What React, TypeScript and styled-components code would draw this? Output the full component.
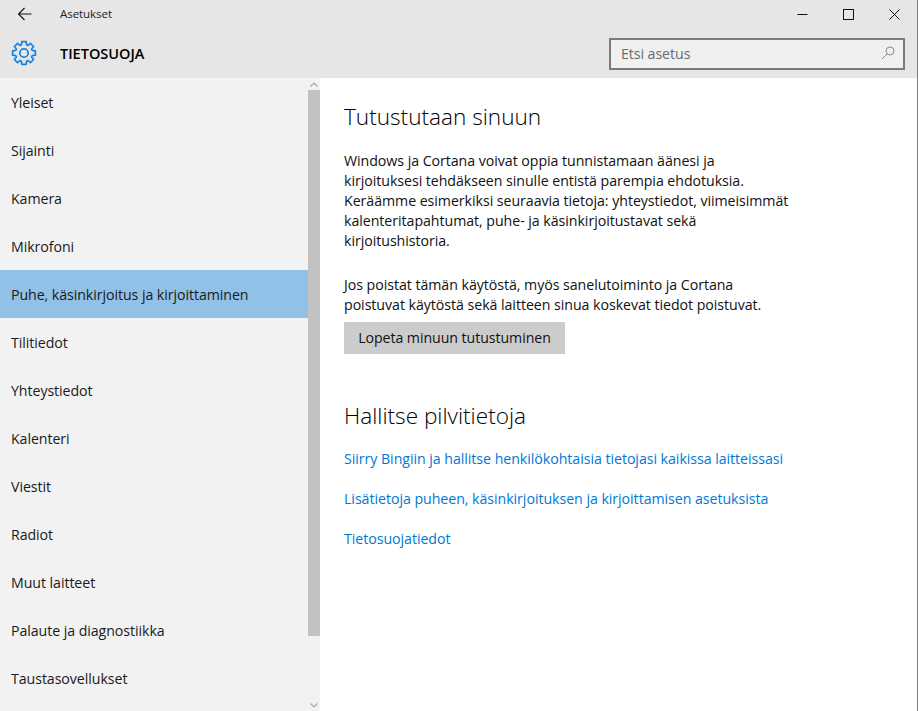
import React from 'react';
import styled, { createGlobalStyle } from 'styled-components';

const GlobalStyle = createGlobalStyle`
  html, body {
    margin: 0;
    padding: 0;
    height: 100%;
    background: #fff;
    font-family: "Open Sans", "Noto Sans", "Liberation Sans", sans-serif;
  }
`;

const Window = styled.div`
  width: 918px;
  height: 711px;
  display: flex;
  flex-direction: column;
  overflow: hidden;
  box-sizing: border-box;
  border-right: 1px solid #7a7a7a;
`;

const Header = styled.header`
  height: 78px;
  flex: none;
  background: #e6e6e6;
  display: flex;
  flex-direction: column;
`;

const TitleBar = styled.div`
  height: 28px;
  display: flex;
  align-items: center;
`;

const BackButton = styled.div`
  width: 60px;
  padding-left: 18px;
  box-sizing: border-box;
  display: flex;
  align-items: center;
`;

const WindowTitle = styled.span`
  flex: 1;
  margin-top: -2px;
  font-size: 11.5px;
  letter-spacing: -0.05px;
  color: #222;
`;

const WindowControls = styled.div`
  display: flex;
  align-items: center;
`;

const ControlButton = styled.div`
  width: 46px;
  height: 28px;
  display: flex;
  align-items: center;
  justify-content: center;
`;

const PageBar = styled.div`
  flex: 1;
  display: flex;
  align-items: center;
`;

const PageIcon = styled.div`
  width: 60px;
  padding-left: 11px;
  box-sizing: border-box;
  display: flex;
  align-items: center;
`;

const PageTitle = styled.h1`
  flex: 1;
  margin: 0;
  font-size: 14.5px;
  font-weight: 600;
  color: #000;
`;

const SearchBox = styled.div`
  width: 296px;
  height: 32px;
  margin: 2px 12px 0 0;
  padding: 0 8px 2px 10px;
  box-sizing: border-box;
  display: flex;
  align-items: center;
  justify-content: space-between;
  border: 2px solid #7a7a7a;
  background: #f0f0f0;
  font-size: 14.2px;
  letter-spacing: -0.07px;
  color: #6b6b6b;
`;

const Body = styled.div`
  flex: 1;
  min-height: 0;
  display: flex;
`;

const Sidebar = styled.nav`
  width: 320px;
  flex: none;
  display: flex;
  background: #f2f2f2;
`;

const NavList = styled.ul`
  flex: 1;
  margin: 0;
  padding: 0;
  list-style: none;
  overflow: hidden;
`;

const NavItem = styled.li<{ $active?: boolean }>`
  height: 48px;
  padding-left: 11px;
  display: flex;
  align-items: center;
  font-size: 14.2px;
  letter-spacing: -0.07px;
  color: #1a1a1a;
  background: ${(p) => (p.$active ? '#91c1e7' : 'transparent')};
`;

const Scrollbar = styled.div`
  width: 12px;
  flex: none;
  display: flex;
  flex-direction: column;
`;

const ScrollArrow = styled.div`
  height: 12px;
  flex: none;
  display: flex;
  align-items: center;
  justify-content: center;
`;

const ScrollTrack = styled.div`
  flex: 1;
`;

const ScrollThumb = styled.div`
  height: 546px;
  background: #c2c2c2;
`;

const Content = styled.main`
  flex: 1;
  padding: 24px 0 0 24px;
  color: #000;
`;

const Heading = styled.h2`
  margin: 0 0 19px;
  font-size: 22.6px;
  line-height: 30px;
  font-weight: 300;
  color: #000;
`;

const Paragraph = styled.p`
  width: 460px;
  margin: 0 0 24px;
  font-size: 14.2px;
  line-height: 20px;
  letter-spacing: -0.05px;
  color: #111;
`;

const ActionButton = styled.div`
  width: 221px;
  height: 32px;
  margin: -17px 0 47px;
  padding-bottom: 2px;
  box-sizing: border-box;
  display: flex;
  align-items: center;
  justify-content: center;
  background: #cccccc;
  font-size: 14.2px;
  letter-spacing: -0.07px;
  color: #111;
`;

const LinkList = styled.div`
  margin-top: -1px;
  display: flex;
  flex-direction: column;
  gap: 20px;
`;

const TextLink = styled.a`
  font-size: 14.2px;
  line-height: 20px;
  letter-spacing: -0.05px;
  color: #0078d7;
`;

const navItems = [
  'Yleiset',
  'Sijainti',
  'Kamera',
  'Mikrofoni',
  'Puhe, käsinkirjoitus ja kirjoittaminen',
  'Tilitiedot',
  'Yhteystiedot',
  'Kalenteri',
  'Viestit',
  'Radiot',
  'Muut laitteet',
  'Palaute ja diagnostiikka',
  'Taustasovellukset',
];

const links = [
  'Siirry Bingiin ja hallitse henkilökohtaisia tietojasi kaikissa laitteissasi',
  'Lisätietoja puheen, käsinkirjoituksen ja kirjoittamisen asetuksista',
  'Tietosuojatiedot',
];

// eight blocky teeth, like the Windows settings glyph
const gearPath = () => {
  const pt = (r: number, a: number) =>
    `${(13 + r * Math.cos(a)).toFixed(2)} ${(13 + r * Math.sin(a)).toFixed(2)}`;
  const parts: string[] = [];
  for (let i = 0; i < 8; i++) {
    const a = (i * Math.PI) / 4 - Math.PI / 2;
    parts.push(pt(8.6, a - 0.3), pt(11.6, a - 0.19), pt(11.6, a + 0.19), pt(8.6, a + 0.3));
  }
  return `M${parts.join('L')}Z`;
};

const GearIcon = () => (
  <svg width="26" height="26" viewBox="0 0 26 26" fill="none" stroke="#1683df" strokeWidth="1.7" strokeLinejoin="round">
    <circle cx="13" cy="13" r="4.2" />
    <path d={gearPath()} />
  </svg>
);

const App: React.FC = () => (
  <>
    <GlobalStyle />
    <Window>
      <Header>
        <TitleBar>
          <BackButton>
            <svg width="14" height="14" viewBox="0 0 14 14" fill="none" stroke="#111" strokeWidth="1.1">
              <path d="M0.5 7H13.5M6.5 1L0.5 7L6.5 13" />
            </svg>
          </BackButton>
          <WindowTitle>Asetukset</WindowTitle>
          <WindowControls>
            <ControlButton>
              <svg width="11" height="11" viewBox="0 0 11 11" stroke="#111" strokeWidth="1">
                <path d="M0.5 5.5H10.5" />
              </svg>
            </ControlButton>
            <ControlButton>
              <svg width="11" height="11" viewBox="0 0 11 11" fill="none" stroke="#111" strokeWidth="1">
                <rect x="0.5" y="0.5" width="10" height="10" />
              </svg>
            </ControlButton>
            <ControlButton>
              <svg width="11" height="11" viewBox="0 0 11 11" stroke="#111" strokeWidth="1">
                <path d="M0.5 0.5L10.5 10.5M10.5 0.5L0.5 10.5" />
              </svg>
            </ControlButton>
          </WindowControls>
        </TitleBar>
        <PageBar>
          <PageIcon>
            <GearIcon />
          </PageIcon>
          <PageTitle>TIETOSUOJA</PageTitle>
          <SearchBox>
            Etsi asetus
            <svg width="14" height="14" viewBox="0 0 14 14" fill="none" stroke="#8a8a8a" strokeWidth="1">
              <circle cx="9" cy="5" r="4" />
              <path d="M6 8L1 13" />
            </svg>
          </SearchBox>
        </PageBar>
      </Header>
      <Body>
        <Sidebar>
          <NavList>
            {navItems.map((item, i) => (
              <NavItem key={item} $active={i === 4}>
                {item}
              </NavItem>
            ))}
          </NavList>
          <Scrollbar>
            <ScrollArrow>
              <svg width="8" height="5" viewBox="0 0 8 5" fill="none" stroke="#a8a8a8" strokeWidth="1.2">
                <path d="M0.5 4.5L4 1L7.5 4.5" />
              </svg>
            </ScrollArrow>
            <ScrollThumb />
            <ScrollTrack />
            <ScrollArrow>
              <svg width="8" height="5" viewBox="0 0 8 5" fill="none" stroke="#a8a8a8" strokeWidth="1.2">
                <path d="M0.5 0.5L4 4L7.5 0.5" />
              </svg>
            </ScrollArrow>
          </Scrollbar>
        </Sidebar>
        <Content>
          <Heading>Tutustutaan sinuun</Heading>
          <Paragraph>
            Windows ja Cortana voivat oppia tunnistamaan äänesi ja
            <br />
            kirjoituksesi tehdäkseen sinulle entistä parempia ehdotuksia.
            <br />
            Keräämme esimerkiksi seuraavia tietoja: yhteystiedot, viimeisimmät
            <br />
            kalenteritapahtumat, puhe- ja käsinkirjoitustavat sekä
            <br />
            kirjoitushistoria.
          </Paragraph>
          <Paragraph>
            Jos poistat tämän käytöstä, myös sanelutoiminto ja Cortana
            <br />
            poistuvat käytöstä sekä laitteen sinua koskevat tiedot poistuvat.
          </Paragraph>
          <ActionButton>Lopeta minuun tutustuminen</ActionButton>
          <Heading>Hallitse pilvitietoja</Heading>
          <LinkList>
            {links.map((link) => (
              <TextLink key={link}>{link}</TextLink>
            ))}
          </LinkList>
        </Content>
      </Body>
    </Window>
  </>
);

export default App;
